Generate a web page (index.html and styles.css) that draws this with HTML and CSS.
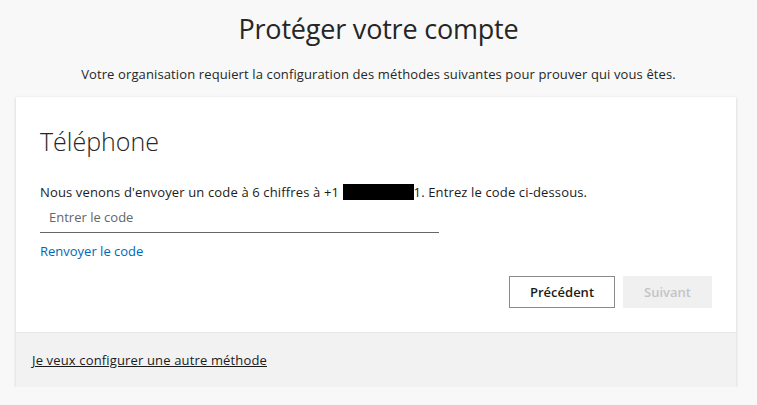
FILE: index.html
```html
<!DOCTYPE html>
<html lang="fr">
<head>
<meta charset="utf-8">
<link rel="stylesheet" href="styles.css">
</head>
<body>
<div class="page">
  <h1 class="title">Protéger votre compte</h1>
  <p class="subtitle">Votre organisation requiert la configuration des méthodes suivantes pour prouver qui vous êtes.</p>
  <div class="card">
    <div class="card-body">
      <h2 class="method">Téléphone</h2>
      <p class="info">Nous venons d'envoyer un code à 6 chiffres à +1 <span class="redact"></span>1. Entrez le code ci-dessous.</p>
      <div class="field"><input class="code" type="text" placeholder="Entrer le code"></div>
      <a class="resend" href="#">Renvoyer le code</a>
      <div class="actions">
        <button class="btn btn-prev">Précédent</button>
        <button class="btn btn-next" disabled>Suivant</button>
      </div>
    </div>
    <div class="card-footer">
      <a class="other" href="#">Je veux configurer une autre méthode</a>
    </div>
  </div>
</div>
</body>
</html>
```
FILE: styles.css
```css
html, body {
  margin: 0;
  padding: 0;
  background: #f8f8f8;
  font-family: "Open Sans", "Noto Sans", sans-serif;
  color: #222;
}
.page {
  display: flex;
  flex-direction: column;
  align-items: center;
  padding-top: 11px;
}
.title {
  margin: 0;
  font-size: 27px;
  font-weight: 400;
  line-height: 36px;
  letter-spacing: -0.2px;
  color: #262626;
}
.subtitle {
  margin: 17px 0 0;
  font-size: 13px;
  line-height: 20px;
  letter-spacing: 0.12px;
  color: #262626;
}
.card {
  align-self: flex-start;
  margin: 13px 0 0 16px;
  width: 720px;
  background: #fff;
  box-shadow: 0 1px 3px rgba(0,0,0,0.18);
}
.card-body {
  padding: 24px 24px 24px 24px;
  display: flex;
  flex-direction: column;
  align-items: flex-start;
}
.method {
  margin: 0;
  font-size: 25px;
  font-weight: 300;
  line-height: 40px;
  color: #262626;
}
.info {
  margin: 22px 0 0;
  font-size: 13px;
  line-height: 18px;
  letter-spacing: 0.14px;
  color: #1b1b1b;
}
.redact {
  display: inline-block;
  width: 71px;
  height: 16px;
  background: #000;
  vertical-align: -3px;
}
.field {
  width: 399px;
  border-bottom: 1px solid #666;
}
.code {
  border: none;
  outline: none;
  background: transparent;
  width: 100%;
  box-sizing: border-box;
  padding: 7px 9px 6px;
  font: 13px "Open Sans", sans-serif;
  color: #222;
}
.code::placeholder { color: #666; }
.resend {
  margin-top: 9px;
  font-size: 13px;
  color: #0067b8;
  text-decoration: none;
}
.actions {
  align-self: stretch;
  display: flex;
  justify-content: flex-end;
  gap: 8px;
  margin-top: 16px;
}
.btn {
  height: 32px;
  font: 600 13px "Open Sans", sans-serif;
  padding: 0 20px;
}
.btn-prev {
  width: 106px;
  background: #fff;
  border: 1px solid #8a8a8a;
  color: #1b1b1b;
}
.btn-next {
  width: 89px;
  background: #f0f0f0;
  border: 1px solid #f0f0f0;
  color: #c4c4c4;
}
.card-footer {
  background: #f2f2f2;
  border-top: 1px solid #e6e6e6;
  padding: 18px 16px 18px;
  font-size: 13px;
  letter-spacing: 0.15px;
}
.other {
  color: #1b1b1b;
  text-decoration: underline;
}
```
